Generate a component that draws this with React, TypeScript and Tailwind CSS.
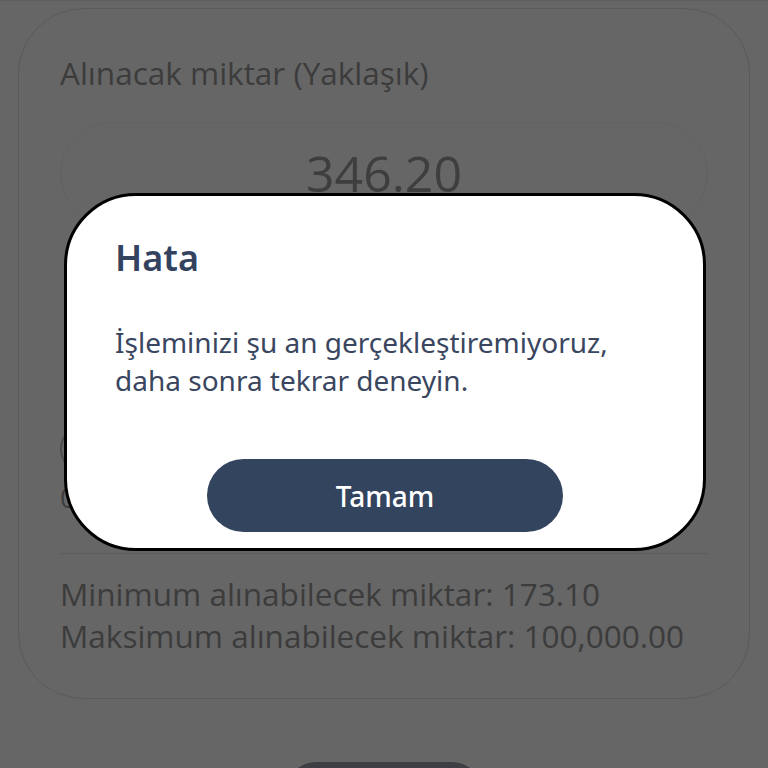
import React from 'react';

const App: React.FC = () => {
  return (
    <div className="relative w-[768px] h-[768px] overflow-hidden bg-[#666666] font-['Open_Sans',sans-serif]">
      {/* dimmed page below the dialog */}
      <div className="border-t border-[#5e5e5e] h-[8px]" />
      <div className="px-[18px]">
        <div className="rounded-[66px] border border-[#5a5a5a] px-[41px] pt-[43px] pb-[41px]">
          <div className="text-[31.5px] leading-[42px] text-[#3c3c3c]">Alınacak miktar (Yaklaşık)</div>
          <div className="mt-[28px] h-[103px] rounded-full border border-[#626262] flex items-center justify-center text-[50px] text-[#3e3e3e]">
            346.20
          </div>
          <div className="h-[328px] pt-[200px]">
            <div className="w-[40px] h-[48px] rounded-l-full border-l-2 border-[#4a4a4a]" />
            <div className="mt-[6px] text-[28px] leading-[36px] text-[#3c3c3c]">0</div>
          </div>
          <div className="border-t border-[#5c5c5c]" />
          <div className="mt-[19px] text-[31.5px] leading-[42px] text-[#3c3c3c]">
            <div>Minimum alınabilecek miktar: 173.10</div>
            <div>Maksimum alınabilecek miktar: 100,000.00</div>
          </div>
        </div>
        <div className="mt-[63px] mx-auto w-[196px] h-[60px] rounded-[30px] bg-[#3d3f45]" />
      </div>

      {/* error dialog */}
      <div className="absolute left-[64px] top-[193px] w-[642px] h-[358px] rounded-[72px] border-[3px] border-black bg-white font-['Noto_Sans',sans-serif] px-[48px] pt-[38px]">
        <div className="text-[36px] leading-[48px] font-semibold text-[#33435f]">Hata</div>
        <div className="mt-[41px] text-[28px] leading-[38px] text-[#3a4660]">
          <div>İşleminizi şu an gerçekleştiremiyoruz,</div>
          <div>daha sonra tekrar deneyin.</div>
        </div>
        <div className="mt-[60px] flex justify-center">
          <button className="w-[356px] h-[73px] rounded-full bg-[#33445f] text-white text-[28px] font-medium">
            Tamam
          </button>
        </div>
      </div>
    </div>
  );
};

export default App;
